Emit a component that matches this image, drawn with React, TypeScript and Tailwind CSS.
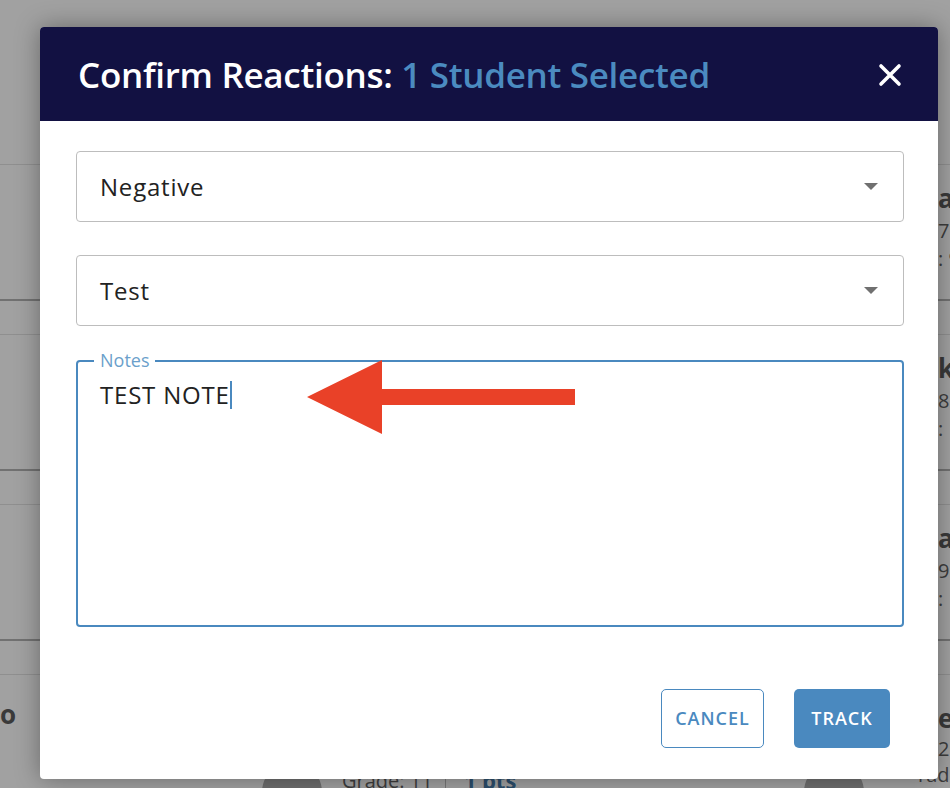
import React from "react";

const font = { fontFamily: '"Open Sans", "Noto Sans", sans-serif' };

function BgRow({ name, id, grade, left }: { name: string; id: string; grade: string; left?: string }) {
  return (
    <div className="h-[170px] border-b-2 border-[#717171] flex flex-col">
      <div className="h-[34px] border-b border-[#8f8f8f]" />
      <div className="flex flex-1">
        <div className="w-[938px] shrink-0 pt-[16px] text-[26px] font-bold text-[#3a3a3a] leading-none">{left ?? ""}</div>
        <div className="flex flex-col pt-[20px] leading-none whitespace-nowrap">
          <span className="text-[26px] font-bold text-[#3a3a3a]">{name}</span>
          <span className="mt-[10px] text-[20px] text-[#3d3d3d]">{id}</span>
          <span className="mt-[8px] text-[20px] text-[#3d3d3d]">{grade}</span>
        </div>
      </div>
    </div>
  );
}

export default function App() {
  return (
    <div className="relative w-[950px] h-[788px] overflow-hidden bg-[#a1a1a1]" style={font}>
      {/* background page */}
      <div className="flex flex-col">
        <div className="h-[131px]" />
        <BgRow name="a" id="7" grade=": 9" />
        <BgRow name="k" id="8" grade=": 1" />
        <BgRow name="a" id="9" grade=": 1" />
        <div className="h-[170px] flex flex-col">
          <div className="h-[34px] border-b border-[#8f8f8f]" />
          <div className="flex flex-1">
            <div className="w-[938px] shrink-0 pt-[26px] text-[26px] font-bold text-[#3a3a3a] leading-none">o</div>
            <div className="flex flex-col pt-[30px] leading-none whitespace-nowrap">
              <span className="text-[26px] font-bold text-[#3a3a3a]">el</span>
              <span className="mt-[8px] text-[20px] text-[#3d3d3d]">20</span>
              <span className="mt-[6px] text-[20px] text-[#3d3d3d] -ml-[20px]">rade: 1</span>
            </div>
          </div>
        </div>
      </div>
      {/* bottom peeking content */}
      <div className="absolute left-[262px] top-[762px] flex items-start whitespace-nowrap">
        <div className="w-[60px] h-[60px] rounded-full bg-[#6e6e6e]" />
        <span className="ml-[20px] mt-[4px] text-[20px] text-[#3d3d3d]">Grade: 11</span>
        <div className="ml-[12px] w-px h-[30px] bg-[#777]" />
        <span className="ml-[18px] mt-[2px] text-[22px] font-bold text-[#2b4d6b]">1 pts</span>
      </div>
      <div className="absolute left-[804px] top-[762px] w-[60px] h-[60px] rounded-full bg-[#6e6e6e]" />

      {/* modal */}
      <div className="absolute left-[40px] top-[27px] w-[898px] h-[752px] bg-white rounded-[4px] shadow-[0_0_24px_rgba(0,0,0,0.35)] flex flex-col overflow-hidden">
        <div className="h-[94px] shrink-0 bg-[#121142] flex items-center justify-between pl-[38px] pr-[36px]">
          <h1 className="text-[35px] font-semibold tracking-[-0.3px] text-white leading-none whitespace-nowrap">
            Confirm Reactions: <span className="text-[#4b8bc0]">1 Student Selected</span>
          </h1>
          <svg width="24" height="24" viewBox="0 0 24 24" className="mt-[1px] shrink-0">
            <path d="M3 3 L21 21 M21 3 L3 21" stroke="white" strokeWidth="3.6" strokeLinecap="round" />
          </svg>
        </div>
        <div className="flex flex-col pl-[36px] pr-[34px] pt-[30px]">
          <div className="h-[71px] border border-[#bdbdbd] rounded-[4px] flex items-center justify-between pl-[23px] pr-[25px]">
            <span className="text-[24px] text-[#222] tracking-[0.8px]">Negative</span>
            <div className="w-0 h-0 border-l-[7px] border-r-[7px] border-t-[7px] border-l-transparent border-r-transparent border-t-[#707070]" />
          </div>
          <div className="mt-[33px] h-[71px] border border-[#bdbdbd] rounded-[4px] flex items-center justify-between pl-[23px] pr-[25px]">
            <span className="text-[24px] text-[#222] tracking-[0.8px]">Test</span>
            <div className="w-0 h-0 border-l-[7px] border-r-[7px] border-t-[7px] border-l-transparent border-r-transparent border-t-[#707070]" />
          </div>
          <div className="relative mt-[34px] h-[267px] border-2 border-[#4a89bf] rounded-[4px] pl-[22px] pt-[18px]">
            <span className="absolute left-[16px] -top-[13px] bg-white px-[6px] text-[18px] leading-[22px] text-[#6b9fcb]">Notes</span>
            <div className="flex items-center">
              <span className="text-[24px] leading-[30px] text-[#222] tracking-[0.8px]">TEST NOTE</span>
              <span className="w-[2px] h-[28px] bg-[#4a89bf]" />
            </div>
            <svg className="absolute left-[229px] -top-[2px]" width="270" height="78" viewBox="0 0 270 78">
              <polygon points="0,37 75,0 75,29 268,29 268,45 75,45 75,74" fill="#e94128" />
            </svg>
          </div>
          <div className="flex justify-end gap-[30px] mt-[62px] pr-[14px]">
            <button className="w-[103px] h-[59px] border border-[#4a89bf] rounded-[5px] text-[18px] font-semibold tracking-[1px] text-[#4a89bf]">
              CANCEL
            </button>
            <button className="w-[96px] h-[59px] bg-[#4a89bf] rounded-[5px] text-[18px] font-semibold tracking-[1px] text-white">
              TRACK
            </button>
          </div>
        </div>
      </div>
    </div>
  );
}
